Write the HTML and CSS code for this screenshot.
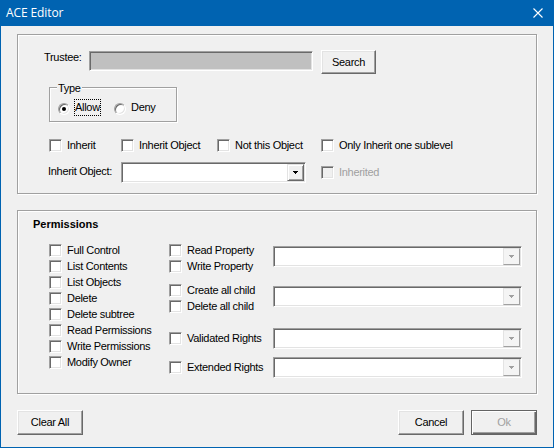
FILE: index.html
```html
<!DOCTYPE html>
<html>
<head>
<meta charset="utf-8">
<title>ACE Editor</title>
<link rel="stylesheet" href="styles.css">
</head>
<body>
<div class="window">
  <div class="titlebar">
    <span class="title">ACE Editor</span>
    <svg class="close" width="10" height="10" viewBox="0 0 10 10"><path d="M0.5 0.5L9.5 9.5M9.5 0.5L0.5 9.5" stroke="#fff" stroke-width="1.1" fill="none"/></svg>
  </div>
  <div class="client">
    <div class="group group-ace">
      <div class="row trustee-row">
        <span class="trustee-lbl">Trustee:</span>
        <div class="sunken trustee-field"></div>
        <div class="btn search-btn">Search</div>
      </div>
      <div class="typebox">
        <span class="legend">Type</span>
        <div class="radio-row">
          <span class="radio checked"></span><span class="focus">Allow</span>
          <span class="radio deny"></span><span class="deny-lbl">Deny</span>
        </div>
      </div>
      <div class="row flags-row">
        <div class="check w72"><span class="box"></span><span>Inherit</span></div>
        <div class="check w96"><span class="box"></span><span>Inherit Object</span></div>
        <div class="check w104"><span class="box"></span><span>Not this Object</span></div>
        <div class="check"><span class="box"></span><span>Only Inherit one sublevel</span></div>
      </div>
      <div class="row inherit-row">
        <span class="io-lbl">Inherit Object:</span>
        <div class="sunken combo io-combo"><span class="dd"><svg width="5" height="3" viewBox="0 0 5 3" shape-rendering="crispEdges"><path d="M0 0h5v1h-5zM1 1h3v1h-3zM2 2h1v1h-1z" fill="#000"/></svg></span></div>
        <div class="check disabled inherited"><span class="box"></span><span>Inherited</span></div>
      </div>
    </div>

    <div class="group group-perm">
      <div class="perm-title">Permissions</div>
      <div class="perm-body">
        <div class="col-left">
          <div class="check"><span class="box"></span><span>Full Control</span></div>
          <div class="check"><span class="box"></span><span>List Contents</span></div>
          <div class="check"><span class="box"></span><span>List Objects</span></div>
          <div class="check"><span class="box"></span><span>Delete</span></div>
          <div class="check"><span class="box"></span><span>Delete subtree</span></div>
          <div class="check"><span class="box"></span><span>Read Permissions</span></div>
          <div class="check"><span class="box"></span><span>Write Permissions</span></div>
          <div class="check"><span class="box"></span><span>Modify Owner</span></div>
        </div>
        <div class="col-right">
          <div class="prow row-a">
            <div class="pchecks">
              <div class="check"><span class="box"></span><span>Read Property</span></div>
              <div class="check"><span class="box"></span><span>Write Property</span></div>
            </div>
            <div class="sunken combo pcombo"><span class="dd dd-off"><svg width="5" height="3" viewBox="0 0 5 3" shape-rendering="crispEdges"><path d="M0 0h5v1h-5zM1 1h3v1h-3zM2 2h1v1h-1z" fill="#a0a0a0"/></svg></span></div>
          </div>
          <div class="prow row-b">
            <div class="pchecks">
              <div class="check"><span class="box"></span><span>Create all child</span></div>
              <div class="check"><span class="box"></span><span>Delete all child</span></div>
            </div>
            <div class="sunken combo pcombo"><span class="dd dd-off"><svg width="5" height="3" viewBox="0 0 5 3" shape-rendering="crispEdges"><path d="M0 0h5v1h-5zM1 1h3v1h-3zM2 2h1v1h-1z" fill="#a0a0a0"/></svg></span></div>
          </div>
          <div class="prow row-c">
            <div class="pchecks single">
              <div class="check"><span class="box"></span><span>Validated Rights</span></div>
            </div>
            <div class="sunken combo pcombo flush"><span class="dd dd-off"><svg width="5" height="3" viewBox="0 0 5 3" shape-rendering="crispEdges"><path d="M0 0h5v1h-5zM1 1h3v1h-3zM2 2h1v1h-1z" fill="#a0a0a0"/></svg></span></div>
          </div>
          <div class="prow row-d">
            <div class="pchecks single">
              <div class="check"><span class="box"></span><span>Extended Rights</span></div>
            </div>
            <div class="sunken combo pcombo flush"><span class="dd dd-off"><svg width="5" height="3" viewBox="0 0 5 3" shape-rendering="crispEdges"><path d="M0 0h5v1h-5zM1 1h3v1h-3zM2 2h1v1h-1z" fill="#a0a0a0"/></svg></span></div>
          </div>
        </div>
      </div>
    </div>

    <div class="actions">
      <div class="btn action-btn">Clear All</div>
      <div class="btn action-btn cancel-btn">Cancel</div>
      <div class="btn action-btn ok-btn">Ok</div>
    </div>
  </div>
</div>
</body>
</html>
```

FILE: styles.css
```css
* { box-sizing: border-box; }

body {
  margin: 0;
  background: #f0f0f0;
  font-family: "Liberation Sans", Arial, sans-serif;
  font-size: 11px;
  line-height: 13px;
  letter-spacing: -0.3px;
  color: #000;
}

.window {
  width: 554px;
  height: 448px;
  border: 1px solid #0063b1;
  border-top: 0;
  background: #f0f0f0;
}

.titlebar {
  height: 26px;
  background: #0063b1;
  color: #fff;
  display: flex;
  align-items: center;
  justify-content: space-between;
  padding: 0 10px 0 5px;
}

.title {
  font-family: "Open Sans", "Noto Sans", sans-serif;
  font-size: 12px;
  letter-spacing: -0.1px;
  line-height: 16px;
}

.close { display: block; }

.client {
  padding: 8px 16px 0 16px;
}

.group {
  border: 1px solid #a0a0a0;
  box-shadow: 1px 1px 0 #fff, inset 1px 1px 0 #fff;
}

.group-ace {
  height: 160px;
  padding-top: 15px;
}

.group-perm {
  height: 184px;
  margin-top: 16px;
  padding-top: 7px;
}

.row {
  display: flex;
  align-items: flex-start;
}

/* sunken 3D edge (edit fields, combos) */
.sunken {
  border: 1px solid;
  border-color: #a0a0a0 #fff #fff #a0a0a0;
  box-shadow: inset 1px 1px 0 #696969, inset -1px -1px 0 #e3e3e3;
}

/* raised push button */
.btn {
  display: flex;
  align-items: center;
  justify-content: center;
  background: #f0f0f0;
  border: 1px solid;
  border-color: #fff #696969 #696969 #fff;
  box-shadow: inset -1px -1px 0 #a0a0a0, inset 1px 1px 0 #e3e3e3;
}

/* Trustee row */
.trustee-row {
  margin-left: 26px;
  height: 24px;
}
.trustee-lbl {
  width: 45px;
  margin-top: 1px;
}
.trustee-field {
  width: 224px;
  height: 20px;
  margin-top: 1px;
  background: #c0c0c0;
}
.search-btn {
  width: 55px;
  height: 24px;
  margin-left: 8px;
}

/* Type group */
.typebox {
  position: relative;
  width: 128px;
  height: 35px;
  margin: 13px 0 0 31px;
  padding: 11px 0 0 8px;
  border: 1px solid #a0a0a0;
  box-shadow: 1px 1px 0 #fff, inset 1px 1px 0 #fff;
}
.legend {
  position: absolute;
  left: 7px;
  top: -6px;
  padding: 0 1px;
  background: #f0f0f0;
}
.radio-row {
  display: flex;
  align-items: flex-start;
}
.radio {
  position: relative;
  flex: none;
  width: 12px;
  height: 12px;
  margin-top: 4px;
  border-radius: 50%;
  background: #fff;
  border: 1px solid;
  border-color: #a0a0a0 #fff #fff #a0a0a0;
  box-shadow: inset 1px 1px 0 #696969, inset -1px -1px 0 #e3e3e3;
}
.radio.checked::after {
  content: "";
  position: absolute;
  left: 3px;
  top: 3px;
  width: 4px;
  height: 4px;
  border-radius: 50%;
  background: #000;
}
.focus {
  width: 27px;
  margin-left: 4px;
  padding: 1px 0;
  border: 1px dotted #000;
}
.radio.deny { margin-left: 13px; }
.deny-lbl {
  margin-left: 5px;
  margin-top: 2px;
}

/* checkboxes */
.check {
  display: flex;
  align-items: center;
  height: 13px;
  white-space: nowrap;
}
.box {
  flex: none;
  width: 13px;
  height: 13px;
  margin-right: 5px;
  background: #fff;
  border: 1px solid;
  border-color: #a0a0a0 #fff #fff #a0a0a0;
  box-shadow: inset 1px 1px 0 #696969, inset -1px -1px 0 #e3e3e3;
}
.check.disabled { color: #a0a0a0; }
.check.disabled .box { background: #f0f0f0; }

.w72 { width: 72px; }
.w96 { width: 96px; }
.w104 { width: 104px; }

.flags-row {
  margin: 17px 0 0 31px;
}

/* Inherit object row */
.inherit-row {
  margin: 10px 0 0 30px;
}
.io-lbl {
  width: 73px;
  margin-top: 3px;
}
.combo {
  display: flex;
  justify-content: flex-end;
  height: 21px;
  padding: 1px;
  background: #fff;
}
.io-combo { width: 185px; }
.inherited {
  margin: 4px 0 0 15px;
}

.dd {
  display: flex;
  align-items: center;
  justify-content: center;
  width: 17px;
  height: 17px;
  background: #f0f0f0;
  border: 1px solid;
  border-color: #e3e3e3 #696969 #696969 #e3e3e3;
  box-shadow: inset 1px 1px 0 #fff, inset -1px -1px 0 #a0a0a0;
}
.dd svg { display: block; }
.dd-off {
  background: #f4f4f4;
  border-color: #e3e3e3 #a0a0a0 #a0a0a0 #e3e3e3;
  box-shadow: none;
}

/* Permissions */
.perm-title {
  margin-left: 15px;
  font-weight: bold;
  letter-spacing: 0;
}
.perm-body {
  display: flex;
  margin: 13px 0 0 31px;
}
.col-left {
  width: 120px;
  display: flex;
  flex-direction: column;
  gap: 3px;
}
.col-right {
  display: flex;
  flex-direction: column;
}
.prow {
  display: flex;
  align-items: flex-start;
}
.pchecks {
  width: 104px;
  display: flex;
  flex-direction: column;
  gap: 3px;
}
.pchecks.single { margin-top: 4px; }
.pcombo {
  width: 249px;
  margin-top: 2px;
}
.pcombo.flush { margin-top: 0; }
.row-b { margin-top: 11px; }
.row-c { margin-top: 15px; }
.row-d { margin-top: 8px; }

/* bottom buttons */
.actions {
  display: flex;
  margin-top: 16px;
}
.action-btn {
  width: 66px;
  height: 25px;
}
.cancel-btn { margin-left: auto; }
.ok-btn {
  margin-left: 7px;
  color: #a0a0a0;
  border-color: #646464;
  box-shadow: inset 1px 1px 0 #fff, inset -1px -1px 0 #696969, inset -2px -2px 0 #a0a0a0;
}
```
